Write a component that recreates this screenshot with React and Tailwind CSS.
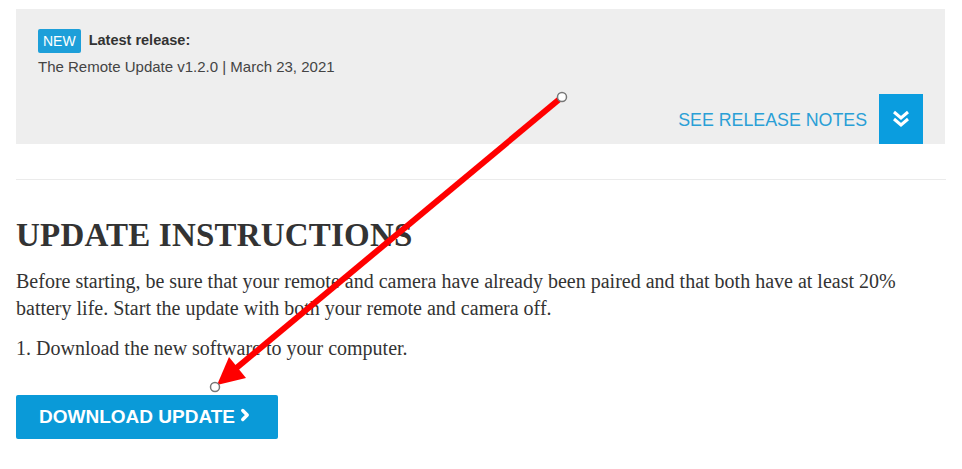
import { ChevronRight } from 'lucide-react'

export default function App() {
  return (
    <div className="relative w-[962px] h-[469px] overflow-hidden bg-white">
      <div className="px-4 pt-[9px]">

        {/* Release banner */}
        <div className="h-[135px] mr-px bg-[#eeeeee] flex flex-col justify-between">
          <div className="pl-[22px] pt-5 font-['Liberation_Sans',Arial,sans-serif]">
            <div className="flex items-center gap-[8px]">
              <span className="bg-[#1d9fd9] text-white text-[14px] leading-none px-[5px] py-[5px] rounded-[2px]">NEW</span>
              <span className="text-[14.5px] font-bold text-[#333]">Latest release:</span>
            </div>
            <div className="mt-[3px] text-[15px] text-[#444]">
              The Remote Update v1.2.0 | March 23, 2021
            </div>
          </div>
          <div className="flex items-center justify-end gap-3 pr-[22px]">
            <span className="text-[17.8px] text-[#2a9fd6] font-['Liberation_Sans',Arial,sans-serif] pt-[2px]">SEE RELEASE NOTES</span>
            <button className="w-[44px] h-[50px] bg-[#0a9ddf] flex items-center justify-center">
              <svg width="20" height="20" viewBox="0 0 20 20" fill="none">
                <path d="M3 3l7 6 7-6" stroke="white" strokeWidth="3" strokeLinejoin="miter" />
                <path d="M3 10l7 6 7-6" stroke="white" strokeWidth="3" strokeLinejoin="miter" />
              </svg>
            </button>
          </div>
        </div>

        <div className="mt-[35px] h-px bg-[#ebebeb]" />

        {/* Instructions */}
        <div className="font-['Liberation_Serif','Times_New_Roman',serif] text-[#333]">
          <h2 className="mt-[39px] text-[33px] font-bold leading-none tracking-[0.2px]">UPDATE INSTRUCTIONS</h2>
          <p className="mt-[16px] text-[20px] leading-[27px] pr-[20px]">
            Before starting, be sure that your remote and camera have already been paired and that both have at least 20% battery life. Start the update with both your remote and camera off.
          </p>
          <p className="mt-[13px] text-[20px] leading-[27px]">1. Download the new software to your computer.</p>
        </div>

        <button className="mt-[33px] w-[262px] h-[44px] bg-[#0a9ad8] rounded-[2px] flex items-center pl-[23px] text-white text-[19px] font-bold font-['Liberation_Sans',Arial,sans-serif]">
          DOWNLOAD UPDATE
          <ChevronRight size={18} strokeWidth={4.5} className="ml-[1px] -mt-[5px]" />
        </button>
      </div>

      {/* Annotation arrow */}
      <svg className="absolute inset-0 pointer-events-none" width="962" height="469">
        <line x1="562" y1="97" x2="234" y2="370" stroke="#ff0000" strokeWidth="6" />
        <polygon points="217,385 229,357 246,378" fill="#ff0000" />
        <circle cx="562" cy="97" r="4.5" fill="white" stroke="#777" strokeWidth="1.5" />
        <circle cx="215" cy="387" r="4.5" fill="white" stroke="#777" strokeWidth="1.5" />
      </svg>
    </div>
  )
}
